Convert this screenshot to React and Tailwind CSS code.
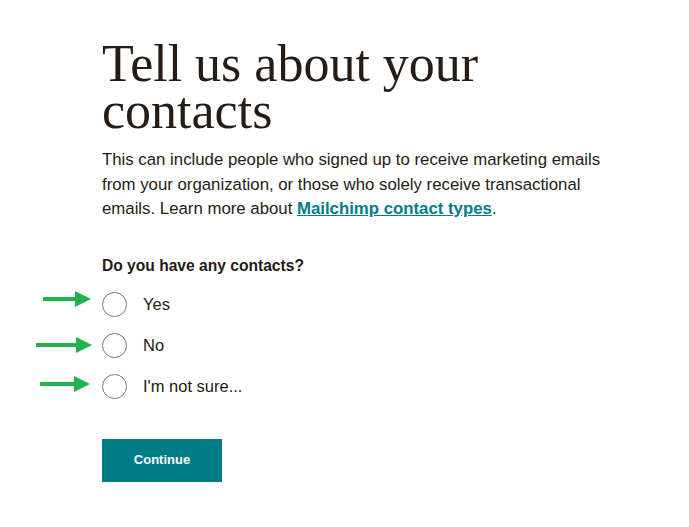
import React, { useState } from "react";

const options = [
  { id: "yes", label: "Yes", arrowLeft: 43, arrowWidth: 48, arrowShift: -5 },
  { id: "no", label: "No", arrowLeft: 36, arrowWidth: 56, arrowShift: 0 },
  { id: "unsure", label: "I'm not sure...", arrowLeft: 40, arrowWidth: 50, arrowShift: -2 },
];

const Arrow = ({ width }) => (
  <svg width={width} height="16" viewBox={`0 0 ${width} 16`} fill="#22b14c">
    <rect x="0" y="6" width={width - 14} height="4" />
    <polygon points={`${width - 16},0 ${width},8 ${width - 16},16`} />
  </svg>
);

const App = () => {
  const [answer, setAnswer] = useState(null);

  return (
    <div
      className="relative min-h-[527px] bg-white text-[#241c15]"
      style={{ fontFamily: '"Liberation Sans", Arial, sans-serif' }}
    >
      <div className="pl-[102px] pt-[40px]">
        <h1
          className="w-[420px] text-[52px] leading-[47px] font-normal"
          style={{ fontFamily: '"Liberation Serif", "Times New Roman", serif' }}
        >
          Tell us about your contacts
        </h1>

        <p className="mt-[14px] w-[520px] text-[16.8px] leading-[24.5px]">
          This can include people who signed up to receive marketing emails
          from your organization, or those who solely receive transactional
          emails. Learn more about{" "}
          <a href="#" className="font-bold text-[#007c89] underline">
            Mailchimp contact types
          </a>
          .
        </p>

        <fieldset className="mt-[33px]">
          <legend className="text-[15.6px] font-bold leading-[22px]">
            Do you have any contacts?
          </legend>

          <div className="mt-[15px] flex flex-col gap-[16px]">
            {options.map((opt) => (
              <label
                key={opt.id}
                className="relative flex h-[25px] cursor-pointer items-center"
              >
                {/* annotation arrow */}
                <span
                  className="absolute top-1/2 -translate-y-1/2"
                  style={{ left: opt.arrowLeft - 102, marginTop: opt.arrowShift }}
                >
                  <Arrow width={opt.arrowWidth} />
                </span>
                <input
                  type="radio"
                  name="contacts"
                  value={opt.id}
                  checked={answer === opt.id}
                  onChange={() => setAnswer(opt.id)}
                  className="peer sr-only"
                />
                <span className="flex h-[25px] w-[25px] items-center justify-center rounded-full border border-[#777] bg-white">
                  {answer === opt.id && (
                    <span className="h-[11px] w-[11px] rounded-full bg-[#007c89]" />
                  )}
                </span>
                <span className="ml-[16px] text-[16.5px]">{opt.label}</span>
              </label>
            ))}
          </div>
        </fieldset>

        <button
          type="button"
          className="mt-[40px] h-[43px] w-[120px] bg-[#007c89] text-[13px] font-bold text-white hover:bg-[#006570]"
        >
          Continue
        </button>
      </div>
    </div>
  );
};

export default App;
